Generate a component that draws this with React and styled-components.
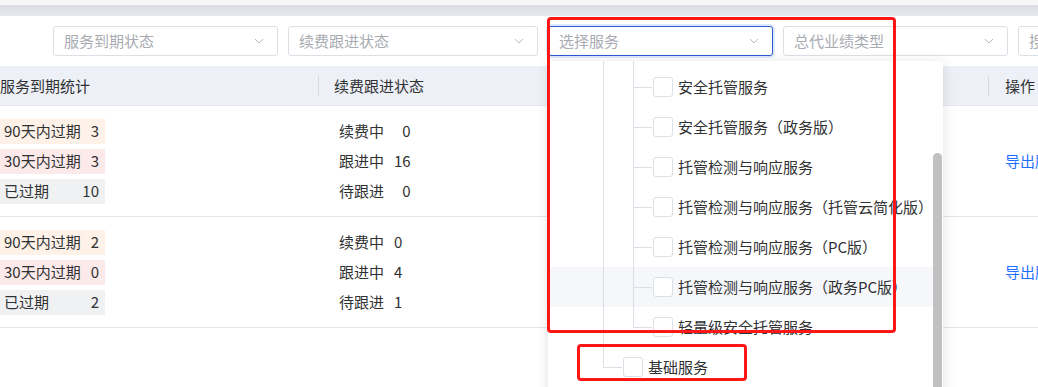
import React from "react";
import styled, { createGlobalStyle } from "styled-components";

const GlobalStyle = createGlobalStyle`
  body {
    margin: 0;
    background: #fff;
    font-family: "Noto Sans CJK SC", "Noto Sans", sans-serif;
    color: #303133;
  }
`;

const Page = styled.div`
  position: relative;
  width: 1038px;
  height: 387px;
  overflow: hidden;
  background: #fff;
`;

const TopBand = styled.div`
  height: 16px;
  background: linear-gradient(#f7f7f8 0 5px, #d9dce1 5px, #e7e9ed 16px);
`;

const FilterBar = styled.div`
  display: flex;
  gap: 10px;
  padding: 10px 0 0 53px;
`;

const Select = styled.div`
  flex: none;
  box-sizing: border-box;
  width: ${(p) => p.$w}px;
  height: 30px;
  display: flex;
  align-items: center;
  justify-content: space-between;
  padding: 0 13px 0 10px;
  border: 1px solid ${(p) => (p.$focused ? "#2b5ad6" : "#dcdfe6")};
  border-radius: 3px;
  box-shadow: ${(p) => (p.$focused ? "0 0 0 2px rgba(70,120,240,0.18)" : "none")};
  font-size: 15px;
  line-height: 20px;
  color: #a8abb2;
  background: #fff;
`;

const Search = styled(Select)`
  width: 60px;
`;

const Chevron = () => (
  <svg width="10" height="6" viewBox="0 0 10 6">
    <polyline points="1,1 5,5 9,1" fill="none" stroke="#b4b8bf" strokeWidth="1" />
  </svg>
);

const Table = styled.div`
  margin-top: 10px;
  font-size: 15px;
`;

const cols = "318px 350px 320px 1fr";

const HeadRow = styled.div`
  display: grid;
  grid-template-columns: ${cols};
  height: 39px;
  background: #edf0f6;
  border-bottom: 1px solid #e4e7ed;
`;

const HeadCell = styled.div`
  display: flex;
  align-items: center;
  line-height: 20px;
  color: #303133;
`;

const Divider = styled.span`
  width: 1px;
  height: 20px;
  background: #d6d9e0;
  margin-right: ${(p) => p.$gap}px;
`;

const Row = styled.div`
  display: grid;
  grid-template-columns: ${cols};
  height: 110px;
  border-bottom: 1px solid #e4e7ed;
`;

const Cell = styled.div`
  display: flex;
  align-items: center;
  padding-left: ${(p) => p.$pad || 0}px;
  overflow: hidden;
`;

const TagList = styled.div`
  display: flex;
  flex-direction: column;
  gap: 5px;
`;

const tagBg = { warn: "#fdf1e8", danger: "#fce9e9", gone: "#f0f1f3" };

const Tag = styled.div`
  box-sizing: border-box;
  width: 105px;
  height: 25px;
  display: flex;
  align-items: center;
  justify-content: space-between;
  padding: 0 6px 0 4px;
  background: ${(p) => tagBg[p.$kind]};
  line-height: 20px;
`;

const FollowGrid = styled.div`
  display: grid;
  grid-template-columns: auto auto;
  column-gap: 10px;
  grid-auto-rows: 30px;
  align-items: center;
  line-height: 20px;
`;

const Count = styled.span`
  justify-self: end;
`;

const Link = styled.span`
  color: #1f6fff;
  white-space: nowrap;
  line-height: 20px;
`;

const Dropdown = styled.div`
  position: absolute;
  left: 548px;
  top: 61px;
  width: 395px;
  height: 340px;
  display: flex;
  background: #fff;
  box-shadow: 0 2px 12px rgba(0, 0, 0, 0.12);
  overflow: hidden;
`;

const TreeList = styled.div`
  flex: 1;
  margin-top: -34px;
`;

const TreeRow = styled.div`
  display: flex;
  align-items: center;
  height: 40px;
  padding-left: 55px;
  background: ${(p) => (p.$hover ? "#f6f7fb" : "transparent")};
  font-size: 15px;
  line-height: 20px;
  color: #303133;
  white-space: nowrap;
`;

const Guide = styled.span`
  align-self: stretch;
  box-sizing: border-box;
  width: 30px;
  border-left: 1px solid #dcdfe6;
`;

const Connector = styled.span`
  align-self: stretch;
  position: relative;
  width: 19px;
  &::before {
    content: "";
    position: absolute;
    left: 0;
    top: 0;
    bottom: ${(p) => (p.$last ? "50%" : "0")};
    border-left: 1px solid #dcdfe6;
  }
  &::after {
    content: "";
    position: absolute;
    left: 0;
    right: 0;
    top: 50%;
    border-top: 1px solid #dcdfe6;
  }
`;

const Check = styled.span`
  box-sizing: border-box;
  width: 20px;
  height: 20px;
  margin-left: 1px;
  border: 1px solid #dcdfe6;
  border-radius: 3px;
  background: #fff;
`;

const ItemText = styled.span`
  margin-left: 5px;
`;

const ScrollTrack = styled.div`
  width: 10px;
  flex: none;
`;

const Thumb = styled.div`
  width: 9px;
  height: 240px;
  margin-top: 92px;
  border-radius: 5px;
  background: #c1c1c1;
`;

const Mark = styled.div`
  position: absolute;
  left: ${(p) => p.$x}px;
  top: ${(p) => p.$y}px;
  width: ${(p) => p.$w}px;
  height: ${(p) => p.$h}px;
  box-sizing: border-box;
  border: 3px solid #ff1616;
  border-radius: 4px;
  pointer-events: none;
`;

const rows = [
  {
    expire: [
      ["warn", "90天内过期", 3],
      ["danger", "30天内过期", 3],
      ["gone", "已过期", 10],
    ],
    follow: [
      ["续费中", 0],
      ["跟进中", 16],
      ["待跟进", 0],
    ],
  },
  {
    expire: [
      ["warn", "90天内过期", 2],
      ["danger", "30天内过期", 0],
      ["gone", "已过期", 2],
    ],
    follow: [
      ["续费中", 0],
      ["跟进中", 4],
      ["待跟进", 1],
    ],
  },
];

// first entry is scrolled above the visible part of the list
const services = [
  null,
  "安全托管服务",
  "安全托管服务（政务版）",
  "托管检测与响应服务",
  "托管检测与响应服务（托管云简化版）",
  "托管检测与响应服务（PC版）",
  "托管检测与响应服务（政务PC版）",
  "轻量级安全托管服务",
];

export default function App() {
  return (
    <Page>
      <GlobalStyle />
      <TopBand />
      <FilterBar>
        <Select $w={225}>
          服务到期状态
          <Chevron />
        </Select>
        <Select $w={250}>
          续费跟进状态
          <Chevron />
        </Select>
        <Select $w={225} $focused>
          选择服务
          <Chevron />
        </Select>
        <Select $w={225}>
          总代业绩类型
          <Chevron />
        </Select>
        <Search $w={60}>搜索</Search>
      </FilterBar>

      <Table>
        <HeadRow>
          <HeadCell>服务到期统计</HeadCell>
          <HeadCell>
            <Divider $gap={15} />
            续费跟进状态
          </HeadCell>
          <HeadCell />
          <HeadCell>
            <Divider $gap={16} />
            操作
          </HeadCell>
        </HeadRow>
        {rows.map((r, i) => (
          <Row key={i}>
            <Cell>
              <TagList>
                {r.expire.map(([kind, label, n]) => (
                  <Tag key={label} $kind={kind}>
                    <span>{label}</span>
                    <span>{n}</span>
                  </Tag>
                ))}
              </TagList>
            </Cell>
            <Cell $pad={21}>
              <FollowGrid>
                {r.follow.map(([label, n]) => (
                  <React.Fragment key={label}>
                    <span>{label}</span>
                    <Count>{n}</Count>
                  </React.Fragment>
                ))}
              </FollowGrid>
            </Cell>
            <Cell />
            <Cell $pad={17}>
              <Link>导出服务明细</Link>
            </Cell>
          </Row>
        ))}
      </Table>

      <Dropdown>
        <TreeList>
          {services.map((s, i) => (
            <TreeRow key={i} $hover={i === 6}>
              <Guide />
              <Connector $last={i === services.length - 1} />
              {s && <Check />}
              {s && <ItemText>{s}</ItemText>}
            </TreeRow>
          ))}
          <TreeRow>
            <Connector $last />
            <Check />
            <ItemText>基础服务</ItemText>
          </TreeRow>
        </TreeList>
        <ScrollTrack>
          <Thumb />
        </ScrollTrack>
      </Dropdown>

      <Mark $x={547} $y={17} $w={349} $h={316} />
      <Mark $x={577} $y={344} $w={170} $h={37} />
    </Page>
  );
}
